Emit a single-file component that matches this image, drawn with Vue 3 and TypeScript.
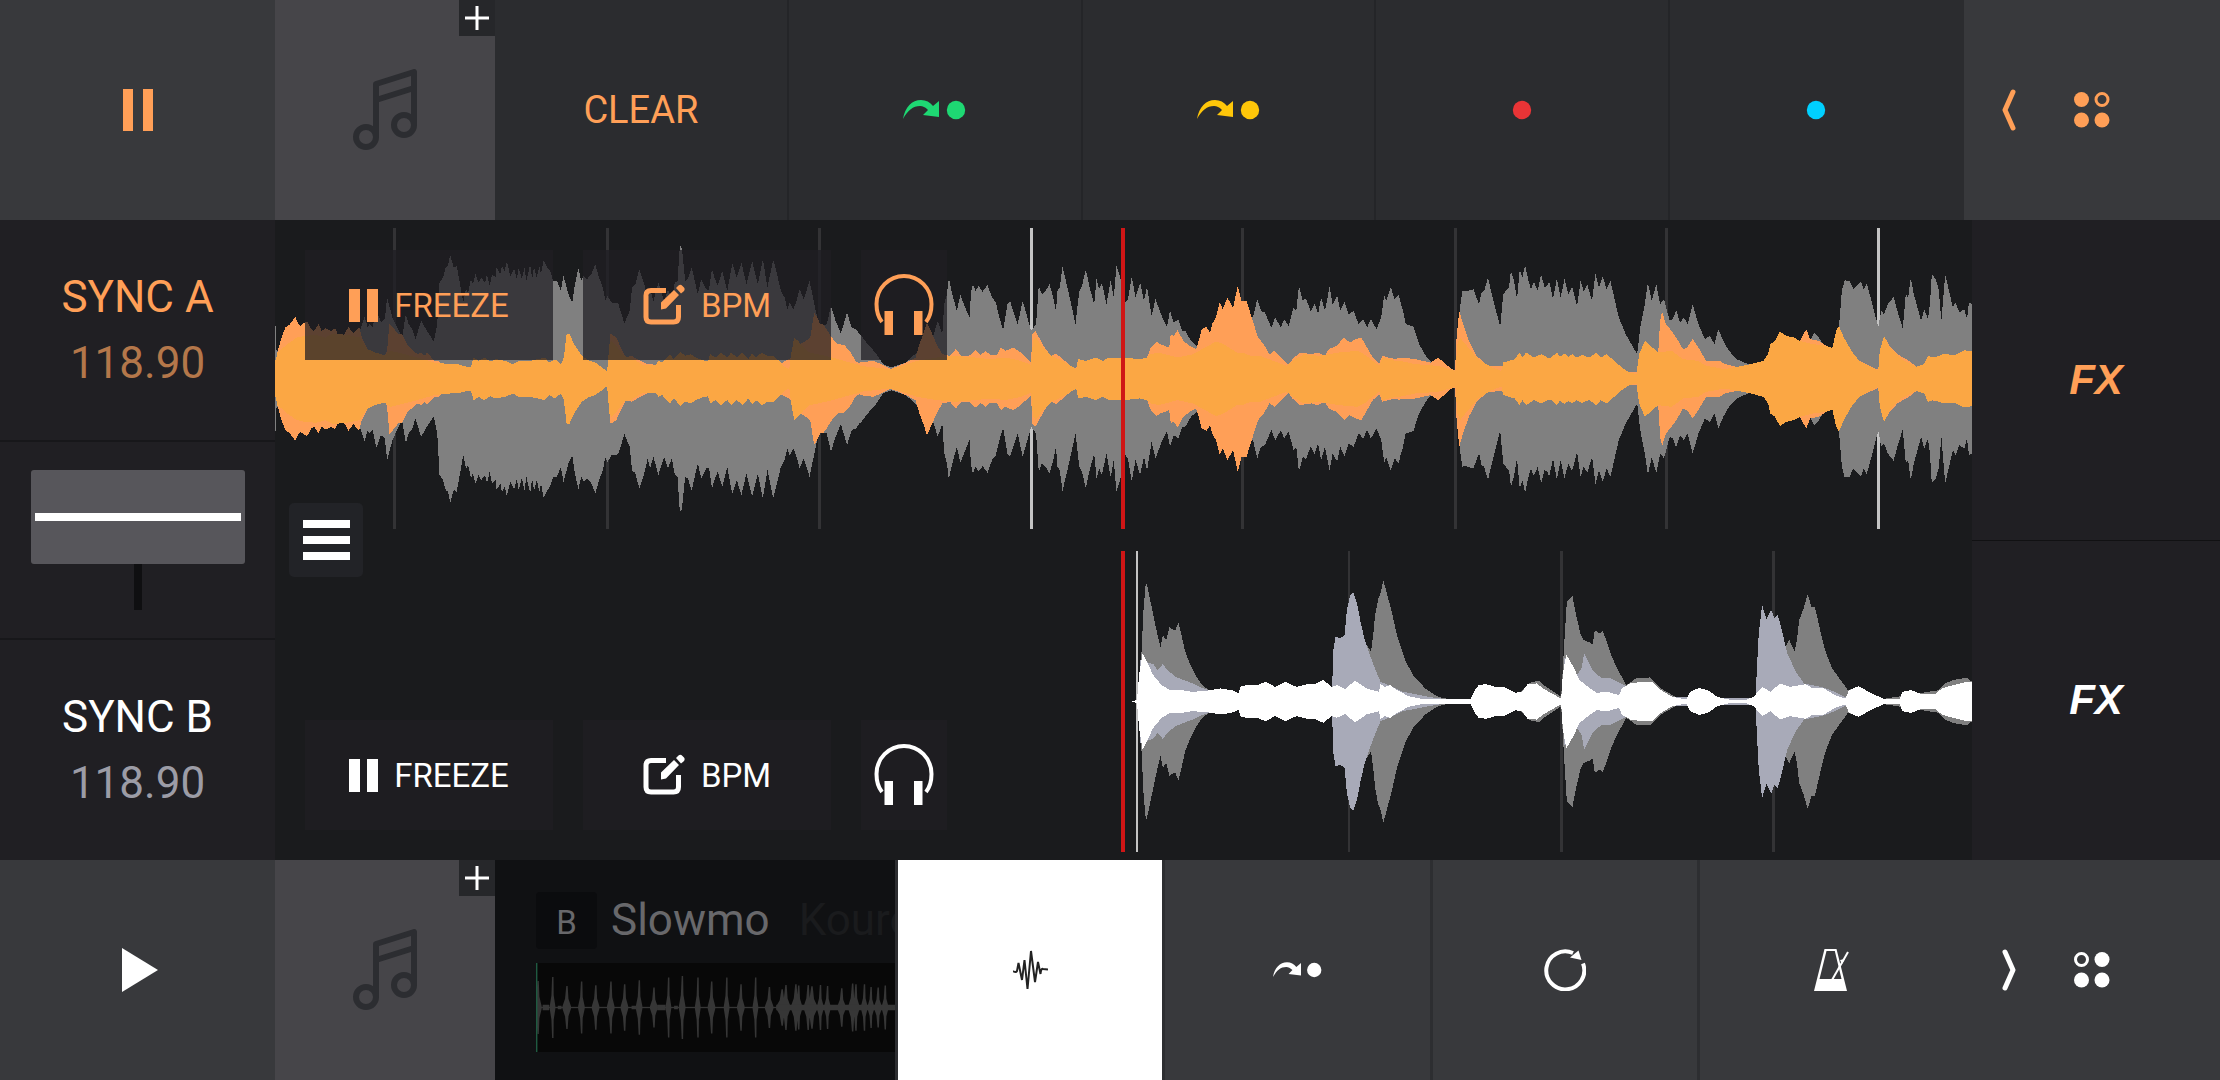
<script setup lang="ts">
import { ref } from 'vue'

type Section = { offset: number; edge: string }

// Builds a closed outline mirrored around the centre line from "x:level" pairs.
function outline(sections: Section[], zero: number, axis: number): string {
  const points: [number, number][] = []
  for (const section of sections) {
    for (const pair of section.edge.trim().split(/\s+/)) {
      const [x, level] = pair.split(':').map(Number)
      points.push([x + section.offset, Math.max(2, Math.abs(level - zero))])
    }
  }
  const top = points.map(([x, a]) => `${x} ${axis - a}`)
  const bottom = [...points].reverse().map(([x, a]) => `${x} ${axis + a}`)
  return `M${top.join('L')}L${bottom.join('L')}Z`
}

const deckA = {
  high: outline(
    [
      {
        offset: -13,
        edge: `13:634 16:634 17:560 200:600 235:620 247:663 255:631 260:640 268:630 278:683 290:645 300:655 306:720 320:660 330:635 345:600 355:670 362:640 372:625 380:595 395:650 410:620 428:588
        437:640 443:765 452:780 459:810 465:815 471:848 480:810 488:815 495:770 505:705 512:745 518:735 525:775 530:760 537:790 545:765 552:780 562:765 567:790 574:755 580:790 590:780 592:810 602:790 606:815 613:800 619:828 628:785 638:808 645:775 650:810 658:775 665:810 670:770 680:820 685:775 690:812 697:780 704:815 708:790 715:832 725:810 732:800
        740:770 750:770 760:740 767:785 780:730 790:705 796:755 806:808 813:770 820:785 828:775 840:790 850:820 860:780 870:750 876:712 882:725 893:705 910:703 926:642 940:680 946:750 955:760 965:805 978:760 987:715 993:745 1002:710 1015:765 1030:710 1040:745 1050:715 1058:765 1065:770 1070:860 1074:880 1078:850 1085:770 1092:775 1102:812 1110:770 1118:730 1127:775 1140:745 1147:742 1155:805 1163:775 1170:755 1182:800 1195:740 1208:822 1220:780 1232:825 1245:760 1260:830 1275:760 1288:835 1300:750 1315:835 1325:790 1335:740 1345:720 1352:685 1358:705 1368:685 1376:710 1384:745 1395:715 1410:770 1420:715 1430:660 1440:635 1455:640 1466:695 1478:650 1492:612 1508:675 1520:630 1532:625 1540:610`,
      },
      {
        offset: 1529,
        edge: `0:610 20:580 40:555 60:520 82:510 120:525 190:600 203:650 215:610 220:700 227:730 232:778 240:735 253:680 262:728 275:690 286:660 290:735 295:760 302:740 310:755 320:738 333:758 345:720 355:705 363:665 374:622 385:700 392:710 400:680 412:640 425:710 435:670 447:620 460:640 467:755 475:730 485:740 495:760 505:720 512:680 516:740 522:750 529:812 537:775 548:720 563:640 573:740 580:755 590:805 600:750 612:700 618:775 625:745 632:765 644:700 655:772 663:720 670:815 680:780 690:700 700:715 710:783 720:720 732:765 742:710 750:752 762:665 772:715 790:660 802:632 810:680 820:645 832:655 842:620 850:620 865:590 880:575 900:550 1020:650 1028:665 1038:715 1048:680 1058:675 1075:630 1085:660 1100:630 1108:655 1120:635 1133:690 1140:680 1147:755 1157:710 1165:718 1178:678 1188:702 1197:670 1205:720 1215:680 1227:752 1235:700 1247:725 1255:680 1266:708 1277:670 1290:680 1303:640 1315:655 1325:630 1335:655 1350:625 1362:660 1370:728 1375:710 1387:752 1397:715 1408:730`,
      },
      {
        offset: 2940,
        edge: `0:712 8:680 15:640 35:633 50:580 70:540 85:522 143:500 150:600 158:700 163:740 170:738 192:745 200:720 207:700 213:735 220:740 230:780 240:730 262:632 270:730 280:745 285:750 290:800 298:770 306:715 313:805 320:780 327:818 335:775 342:745 350:768 360:740 369:790 378:750 385:755 390:770 400:715 410:778 420:720 430:775 440:730 450:752 463:695 472:770 480:740 490:758 502:710 511:792 520:750 530:785 540:745 550:770 560:720 572:660 590:610 610:570 620:550 628:630 640:700 648:765 658:710 670:760 680:700 690:715 705:650 713:655 722:682 732:645 742:660 752:640 765:700 780:640 797:595 810:605 822:580 832:625 845:590 860:560 880:535 910:520 960:500 1060:560 1082:615 1095:600 1105:580 1130:560 1145:600 1155:740 1162:772 1175:770 1185:745 1197:760 1205:768 1212:745 1220:762 1230:720 1240:675 1250:632 1258:680 1265:670 1275:700 1290:722 1300:680 1314:628 1322:730 1328:720 1335:780 1343:730 1355:680 1362:650 1370:685 1380:655 1385:700 1390:790 1400:775 1408:745 1415:650 1425:790 1435:740 1445:690 1452:705 1462:675 1475:685 1482:655 1487:705 1495:700`,
      },
    ],
    476,
    453,
  ),
  mid: outline(
    [
      {
        offset: -13,
        edge: `14:520 18:550 30:600 40:630 52:640 66:662 75:640 80:635 90:645 97:648 108:625 115:620 127:640 135:620 145:628 160:620 170:628 180:603 192:605 205:632 218:612 233:632 240:600 255:565 275:555 300:545 306:560 312:642 325:625 335:610 345:610 360:575 375:560 385:550 395:555 405:545 410:555 430:530 440:530 445:525 480:500 882:490 890:612 905:600 915:575 930:540 945:545 960:535 985:520 1300:500 1363:540 1385:580 1400:590 1412:600 1422:675 1430:660 1438:640 1445:640 1455:625 1465:605 1475:590 1485:580 1500:578 1515:560 1530:530 1540:522`,
      },
      {
        offset: 1529,
        edge: `0:525 35:530 55:520 80:506 100:515 120:525 145:540 155:580 165:610 175:645 185:620 200:580 215:550 235:545 250:565 265:545 285:545 302:562 315:548 328:560 340:548 358:548 368:570 380:560 400:570 420:555 447:525 450:610 458:620 470:595 485:565 500:545 512:552 530:535 550:515 565:507 570:535 590:530 615:540 635:530 650:540 665:540 690:540 730:535 750:540 760:570 775:588 785:580 808:570 812:610 820:605 830:622 845:590 862:575 878:565 885:590 893:625 905:632 915:615 920:640 930:660 940:705 948:685 960:720 975:690 987:755 997:710 1010:710 1025:655 1040:600 1055:580 1070:550 1083:560 1100:540 1120:518 1130:535 1150:555 1180:550 1195:555 1215:545 1225:565 1245:575 1265:600 1280:585 1295:595 1310:600 1325:570 1340:540 1357:522 1365:545 1380:540 1400:535 1410:540`,
      },
      {
        offset: 2940,
        edge: `0:538 20:538 40:535 80:525 100:540 115:525 135:505 144:503 148:600 155:680 165:640 180:590 200:545 230:515 620:495 625:550 640:590 655:575 675:555 680:650 685:678 695:640 710:620 722:600 740:565 750:570 765:595 780:570 800:530 835:530 850:520 880:512 910:518 950:530 962:550 968:580 980:590 993:618 1010:605 1030:600 1045:590 1052:605 1062:625 1072:595 1095:590 1115:575 1130:568 1140:620 1147:635 1160:600 1180:560 1200:530 1250:503 1254:560 1265:605 1280:575 1300:550 1330:530 1350:512 1370:520 1380:540 1495:550`,
      },
    ],
    476,
    453,
  ),
  low: outline(
    [
      {
        offset: -13,
        edge: `14:530 20:555 45:580 70:600 90:605 120:608 145:600 165:612 200:608 235:600 240:590 255:565 275:555 300:547 315:560 345:552 400:535 430:525 470:520 490:520 515:512 525:512 532:540 545:530 560:540 575:528 590:535 615:530 635:520 650:530 680:530 700:535 718:540 730:525 745:535 760:520 768:540 775:610 782:612 795:580 815:545 835:530 850:525 870:508 881:498 887:580 892:590 905:575 925:545 945:538 975:518 1008:518 1015:530 1025:525 1045:550 1055:535 1073:557 1085:545 1100:550 1113:540 1130:532 1145:528 1150:550 1165:540 1178:555 1195:540 1205:555 1220:540 1235:555 1250:535 1260:552 1270:540 1285:555 1300:545 1315:545 1330:530 1345:512 1357:505 1362:550 1370:600 1380:590 1395:570 1410:555 1440:548 1470:540 1500:530 1540:518`,
      },
      {
        offset: 1529,
        edge: `0:515 80:505 110:515 150:530 200:540 250:545 300:540 340:535 380:540 420:530 447:518 452:590 460:600 475:575 500:545 530:530 565:505 570:535 590:530 615:540 635:530 650:540 690:540 730:535 750:540 760:550 780:555 830:540 870:550 930:588 950:580 985:555 1000:555 1020:545 1045:545 1080:530 1115:515 1130:530 1160:550 1200:545 1225:550 1250:555 1300:560 1320:548 1357:515 1365:540 1400:530 1410:530`,
      },
      {
        offset: 2940,
        edge: `0:530 40:520 100:515 145:500 150:580 157:600 175:575 205:535 240:510 265:500 270:525 300:535 312:555 320:540 330:555 350:540 370:550 385:540 395:540 410:555 418:542 430:552 440:542 450:550 462:540 475:548 495:540 513:555 525:540 540:550 560:530 580:510 600:495 618:490 625:550 640:590 655:575 675:555 710:560 740:535 780:530 800:515 850:505 880:512 910:518 950:530 962:550 968:580 980:590 993:618 1010:605 1030:600 1045:590 1062:585 1080:580 1115:575 1130:568 1140:620 1147:635 1160:600 1180:560 1200:530 1250:500 1254:560 1265:605 1280:570 1310:535 1350:512 1370:520 1380:545 1395:540 1420:550 1450:548 1475:562 1495:558`,
      },
    ],
    476,
    453,
  ),
}

const deckB = {
  high: outline(
    [
      {
        offset: 0,
        edge: `68:480 74:340 78:200 82:125 86:150 92:200 100:265 108:322 112:285 118:300 124:262 130:268 134:272 140:248 146:290 152:335 160:370 170:405 180:430 192:448 210:480 450:480 470:300 483:335 488:270 490:230 496:175 500:160 505:120 512:165 520:215 530:290 545:365 560:410 580:445 600:468 615:475 745:480 752:450 765:428 782:422 795:440 822:470 826:350 832:185 838:175 842:168 848:220 856:280 862:300 870:305 878:312 882:270 890:280 896:272 902:300 912:350 925:395 938:435 955:415 980:412 1000:445 1025:470 1040:478 1200:480 1222:320 1228:298 1238:335 1242:300 1246:240 1254:205 1261:163 1268:200 1274:200 1282:260 1292:330 1305:385 1320:420 1333:450 1352:440 1390:478 1495:450 1506:430 1520:420 1545:412 1554:425`,
      },
    ],
    484,
    451,
  ),
  mid: outline(
    [
      {
        offset: 0,
        edge: `72:360 95:372 103:390 112:372 120:390 135:410 150:420 165:430 180:442 195:450 210:478 413:478 416:330 420:290 428:295 436:285 440:210 446:165 452:158 458:190 465:250 472:300 480:340 490:385 500:425 515:435 540:455 580:468 605:475 823:478 828:350 850:405 858:385 863:340 870:365 880:395 895:415 910:415 930:432 940:440 1000:470 1168:475 1174:280 1180:195 1188:238 1196:208 1202:235 1208:225 1215:270 1225:340 1240:395 1255:430 1285:440 1310:455 1330:472`,
      },
    ],
    484,
    451,
  ),
  low: outline(
    [
      {
        offset: 0,
        edge: `58:483 66:480 70:400 76:340 85:370 95:405 110:435 125:450 145:450 165:455 190:452 215:445 235:450 247:460 250:440 265:433 280:435 295:425 312:440 330:425 350:440 370:432 385:430 398:420 413:440 422:435 438:447 445:435 455:422 475:445 497:455 500:432 508:440 517:435 530:450 550:468 570:475 600:478 660:478 668:450 675:435 688:432 705:440 722:442 740:458 752:455 762:432 778:430 790:445 805:460 822:475 825:400 831:343 842:375 855:420 870:440 885:458 905:455 925:465 930:445 945:430 965:425 985:425 1000:450 1020:470 1045:478 1052:455 1068:443 1085:452 1100:470 1120:478 1150:480 1165:470 1180:440 1195:455 1212:430 1230:440 1258:432 1270:445 1290:445 1310:465 1328:475 1335:450 1352:438 1370:455 1395:475 1425:478 1430:455 1445:450 1465:462 1490:460 1500:445 1520:435 1545:425 1554:425`,
      },
    ],
    484,
    451,
  ),
}

const gridA = [
  { x: 312, bar: false },
  { x: 869, bar: false },
  { x: 1423, bar: false },
  { x: 1977, bar: true },
  { x: 2529, bar: false },
  { x: 3085, bar: false },
  { x: 3636, bar: false },
  { x: 4190, bar: true },
]
const gridB = [
  { x: 66, bar: true },
  { x: 444, bar: false },
  { x: 822, bar: false },
  { x: 1200, bar: false },
]

// Track overview: position, height and width of each hit.
const hits: [number, number, number][] = [
  [4, 80, 8], [35, 92, 6], [65, 65, 9], [96, 78, 7], [126, 67, 8], [158, 78, 8], [187, 70, 8], [218, 82, 7],
  [249, 60, 8], [280, 90, 6], [309, 95, 7], [342, 90, 6], [371, 78, 8], [403, 90, 6], [433, 70, 8], [464, 90, 6],
  [493, 62, 9], [520, 55, 12], [528, 68, 10], [549, 70, 10], [555, 66, 8], [575, 68, 9], [583, 64, 12], [601, 68, 7],
  [616, 65, 7], [646, 58, 9], [669, 72, 9], [676, 70, 8], [694, 70, 7], [708, 62, 7], [723, 60, 8], [738, 66, 7],
]
const hitPath = hits
  .map(([x, h, w]) => {
    const s = w * 0.4
    return `M${x - w} 130L${x - s} ${134 - h * 0.4}L${x - 1} ${134 - h}H${x + 2}L${x + s} ${134 - h * 0.4}L${x + w} 130V138L${x + s} ${134 + h * 0.4}L${x + 2} ${134 + h}H${x - 1}L${x - s} ${134 + h * 0.4}L${x - w} 138Z`
  })
  .join('')

const jumpShape = 'M0 19C2 7 9 0 18 0C23 0 27 2 30 6L36 1V17L20 15L25 10C22 7 20 6 17 6C10 6 5 10 0 19Z'
const pads = [
  { name: 'Cue 1', color: '#1ed873', jump: true },
  { name: 'Cue 2', color: '#fec609', jump: true },
  { name: 'Cue 3', color: '#e93436', jump: false },
  { name: 'Cue 4', color: '#00d0ff', jump: false },
]
const tabs = ['Waveform', 'Cues', 'Loop', 'Tempo']
const decks = [
  { id: 'a', wave: deckA, grid: gridA, box: '0 0 4435 904', head: 2211, headWidth: 11, lineWidth: 8 },
  { id: 'b', wave: deckB, grid: gridB, box: '-1470 0 3024 902', head: 37, headWidth: 8, lineWidth: 5 },
]
const fade = ref(0)
</script>

<template>
  <main class="app">
    <header class="strip strip-a">
      <button class="transport" aria-label="Pause deck A">
        <svg width="30" height="42" viewBox="0 0 30 42"><path d="M0 0H10V42H0ZM20 0H30V42H20Z" /></svg>
      </button>
      <div class="album">
        <svg class="note" width="64" height="82" viewBox="0 0 64 82">
          <circle cx="13" cy="68" r="10" /><circle cx="51" cy="56" r="10" />
          <path d="M23 68V15L61 3V56M23 31L61 19" />
        </svg>
        <button class="add" aria-label="Load track on deck A">
          <svg width="24" height="24" viewBox="0 0 24 24"><path d="M12 0V24M0 12H24" /></svg>
        </button>
      </div>
      <nav class="pads">
        <button class="pad clear">CLEAR</button>
        <button v-for="p in pads" :key="p.name" class="pad" :aria-label="p.name">
          <svg v-if="p.jump" width="63" height="20" viewBox="0 0 63 20" :style="{ fill: p.color }">
            <path :d="jumpShape" /><circle cx="53" cy="10" r="9.2" />
          </svg>
          <svg v-else width="20" height="20" viewBox="0 0 20 20" :style="{ fill: p.color }"><circle cx="10" cy="10" r="9.2" /></svg>
        </button>
      </nav>
      <div class="modes">
        <button class="arrow" aria-label="Previous panel">
          <svg width="16" height="42" viewBox="0 0 16 42"><path d="M12 3L4 21L12 39" /></svg>
        </button>
        <button class="dots" aria-label="Panels deck A">
          <svg width="36" height="36" viewBox="0 0 36 36">
            <circle cx="7.5" cy="7.5" r="7.5" /><circle class="ring" cx="28" cy="7.5" r="6" />
            <circle cx="7.5" cy="28" r="7.5" /><circle cx="28" cy="28" r="7.5" />
          </svg>
        </button>
      </div>
    </header>

    <section class="middle">
      <aside class="side">
        <button class="sync a"><span>SYNC A</span><span class="tempo">118.90</span></button>
        <div class="fader"><input v-model="fade" type="range" min="0" max="100" aria-label="Crossfader" /></div>
        <button class="sync b"><span>SYNC B</span><span class="tempo">118.90</span></button>
      </aside>

      <div class="waves">
        <div v-for="d in decks" :key="d.id" class="deck" :class="d.id">
          <svg class="wave" :viewBox="d.box" preserveAspectRatio="none" shape-rendering="crispEdges">
            <rect v-for="g in d.grid" :key="g.x" :class="g.bar ? 'bar' : 'beat'" :x="g.x - d.lineWidth / 2" y="0" :width="d.lineWidth" height="904" />
            <path class="high" :d="d.wave.high" /><path class="mid" :d="d.wave.mid" /><path class="low" :d="d.wave.low" />
            <rect class="head" :x="d.head" y="0" :width="d.headWidth" height="904" />
          </svg>
          <div class="controls">
            <button class="control">
              <svg width="29" height="33" viewBox="0 0 29 33"><path d="M0 0H11V33H0ZM18 0H29V33H18Z" /></svg>FREEZE
            </button>
            <button class="control">
              <svg width="42" height="42" viewBox="0 0 42 42">
                <path class="frame" d="M23 6.5H8Q3 6.5 3 11.5V33Q3 38 8 38H30.5Q35.5 38 35.5 33V21" />
                <path d="M18 25.5V18.5L31 6L36 11L23 24.5ZM33 4L35.5 1.5Q37.5 0 39.5 2L41 3.5Q42.5 5.5 40.5 7.5L38 9.500Z" />
              </svg>BPM
            </button>
            <button class="control phones" aria-label="Pre-cueing">
              <svg width="60" height="62" viewBox="0 0 60 62">
                <path class="band" d="M8 48C4 43 2.5 36 2.5 30A27.5 28 0 0 1 57.5 30C57.5 36 56 43 52 48" />
                <path d="M10.5 37H19V61H10.5ZM40 37H48.5V61H40Z" />
              </svg>
            </button>
          </div>
        </div>
        <button class="menu" aria-label="Menu"><i></i><i></i><i></i></button>
      </div>

      <aside class="effects">
        <button class="fx a">FX</button>
        <button class="fx b">FX</button>
      </aside>
    </section>

    <footer class="strip strip-b">
      <button class="transport" aria-label="Play deck B">
        <svg class="play" width="36" height="44" viewBox="0 0 36 44"><path d="M0 0L36 22L0 44Z" /></svg>
      </button>
      <div class="album">
        <svg class="note" width="64" height="82" viewBox="0 0 64 82">
          <circle cx="13" cy="68" r="10" /><circle cx="51" cy="56" r="10" />
          <path d="M23 68V15L61 3V56M23 31L61 19" />
        </svg>
        <button class="add" aria-label="Load track on deck B">
          <svg width="24" height="24" viewBox="0 0 24 24"><path d="M12 0V24M0 12H24" /></svg>
        </button>
      </div>
      <div class="track">
        <div class="title"><span class="badge">B</span><span class="name">Slowmo</span><span class="artist">Kouro</span></div>
        <svg class="overview" viewBox="0 0 759 268" preserveAspectRatio="none">
          <path :d="hitPath" /><rect x="0" y="132" width="759" height="4" />
          <path d="M14 126H28V142H14ZM46 129H54V139H46ZM202 129H212V139H202ZM256 126H274V142H256ZM292 129H300V139H292ZM508 126H759V142H508Z" />
          <rect class="start" x="0" y="0" width="3" height="268" />
        </svg>
      </div>
      <nav class="tabs">
        <button v-for="(t, i) in tabs" :key="t" class="tab" :class="{ active: i === 0 }" :aria-label="t">
          <svg v-if="i === 0" class="pulse" width="35" height="42" viewBox="0 0 35 42">
            <path d="M0 22Q3 24 4 22L5.5 14L9 31L11.5 11L14.5 40L18 2L22 33L25 13L27.5 25Q28 19 30 20L35 20.5" />
          </svg>
          <svg v-else-if="i === 1" width="49" height="16" viewBox="0 0 63 20"><path :d="jumpShape" /><circle cx="53" cy="10" r="9.2" /></svg>
          <svg v-else-if="i === 2" width="42" height="42" viewBox="0 0 42 42">
            <path class="loop" d="M39 14.5A19 19 0 1 1 29 4" /><path d="M34.5 1.5L37.5 11L26 8.5Z" />
          </svg>
          <svg v-else width="36" height="42" viewBox="0 0 36 42">
            <path d="M10.5 0H22.5L33 42H0ZM12.5 2L5.5 30H27.5L20.8 2Z" fill-rule="evenodd" />
            <path class="needle" d="M18 31L34 3" /><path d="M26 11L31 10L28 15Z" />
          </svg>
        </button>
      </nav>
      <div class="modes">
        <button class="arrow" aria-label="Next panel">
          <svg width="16" height="42" viewBox="0 0 16 42"><path d="M4 3L12 21L4 39" /></svg>
        </button>
        <button class="dots" aria-label="Panels deck B">
          <svg width="36" height="36" viewBox="0 0 36 36">
            <circle class="ring" cx="7.5" cy="7.5" r="6" /><circle cx="28" cy="7.5" r="7.5" />
            <circle cx="7.5" cy="28" r="7.5" /><circle cx="28" cy="28" r="7.5" />
          </svg>
        </button>
      </div>
    </footer>
  </main>
</template>

<style>
body {
  margin: 0;
  background: #1a1b1d;
}
</style>

<style scoped>
.app {
  --orange: #ff9f57;
  display: grid;
  grid-template-rows: 220px minmax(640px, 1fr) 220px;
  min-height: 100vh;
  font-family: Roboto, "Liberation Sans", sans-serif;
  color: #fff;
}
button {
  margin: 0;
  padding: 0;
  border: 0;
  background: none;
  color: inherit;
  font: inherit;
  display: flex;
  align-items: center;
  justify-content: center;
}
svg {
  display: block;
}
button svg {
  fill: currentColor;
}
.strip {
  display: grid;
  background: #38393c;
}
.strip-a {
  grid-template-columns: 275px 220px 1fr 256px;
  color: var(--orange);
}
.strip-b {
  grid-template-columns: 275px 220px minmax(0, 400px) 1fr 256px;
}
.play {
  margin-left: 4px;
}
.album {
  position: relative;
  display: flex;
  align-items: center;
  justify-content: center;
  background: #464549;
}
.note {
  fill: none;
  stroke: #2c2d31;
  stroke-width: 6;
  stroke-linejoin: round;
}
.add {
  position: absolute;
  top: 0;
  right: 0;
  width: 36px;
  height: 36px;
  background: #26272a;
  color: #fff;
}
.add svg {
  stroke: currentColor;
  stroke-width: 3;
}
.pads {
  display: grid;
  grid-template-columns: repeat(5, 1fr);
  background: #2b2c2f;
}
.pad {
  border-right: 2px solid #242528;
}
.pad:last-child {
  border-color: transparent;
}
.clear {
  font-size: 38px;
}
.modes {
  display: flex;
}
.arrow {
  width: 89px;
}
.arrow svg {
  fill: none;
  stroke: currentColor;
  stroke-width: 5;
  stroke-linecap: round;
  stroke-linejoin: round;
}
.dots {
  width: 77px;
}
.ring {
  fill: none;
  stroke: currentColor;
  stroke-width: 3;
}
.middle {
  display: grid;
  grid-template-columns: 275px 1fr 248px;
}
.side,
.effects {
  display: flex;
  flex-direction: column;
  background: #201f23;
}
.sync {
  flex: 221;
  flex-direction: column;
  font-size: 44px;
  line-height: 66px;
}
.sync.a,
.fx.a {
  color: var(--orange);
}
.sync.a .tempo {
  color: #b4774a;
}
.sync.b .tempo {
  color: #9c9ca6;
}
.fader {
  flex: 198;
  display: flex;
  align-items: center;
  justify-content: center;
  border: solid #17171a;
  border-width: 2px 0;
}
.fader input {
  appearance: none;
  writing-mode: vertical-lr;
  width: 214px;
  height: 140px;
  margin: 0;
  background: linear-gradient(#0f0f11, #0f0f11) center / 8px 100% no-repeat;
}
.fader input::-webkit-slider-thumb {
  appearance: none;
  width: 214px;
  height: 94px;
  border-radius: 3px;
  background: linear-gradient(#fff, #fff) center / 206px 8px no-repeat #57565b;
}
.waves {
  position: relative;
  display: flex;
  flex-direction: column;
  gap: 22px;
  padding: 8px 0;
  background: #1a1b1d;
}
.deck {
  position: relative;
  flex: 1;
}
.wave {
  position: absolute;
  width: 100%;
  height: 100%;
}
.beat {
  fill: #333335;
}
.bar {
  fill: #c4c4c4;
}
.head {
  fill: #cf1616;
}
.high {
  fill: #808080;
}
.a .mid {
  fill: var(--orange);
}
.a .low {
  fill: #fba744;
}
.b .mid {
  fill: #a8aab8;
}
.b .low {
  fill: #fff;
}
.controls {
  position: absolute;
  left: 30px;
  top: 22px;
  display: flex;
  gap: 30px;
}
.b .controls {
  top: auto;
  bottom: 22px;
}
.a .controls {
  color: var(--orange);
}
.control {
  width: 248px;
  height: 110px;
  gap: 16px;
  background: rgba(31, 30, 36, 0.73);
  font-size: 33px;
}
.phones {
  width: 86px;
}
.frame,
.band {
  fill: none;
  stroke: currentColor;
  stroke-width: 5;
}
.band {
  stroke-width: 4;
}
.menu {
  position: absolute;
  left: 14px;
  top: 50%;
  transform: translateY(-50%);
  width: 74px;
  height: 74px;
  flex-direction: column;
  gap: 8px;
  border-radius: 5px;
  background: #222327;
}
.menu i {
  width: 47px;
  height: 8px;
  background: #fff;
}
.fx {
  flex: 1;
  font: italic bold 42px "Liberation Sans", sans-serif;
}
.fx.a {
  border-bottom: 1px solid #111113;
}
.track {
  padding: 32px 0 28px 41px;
  background: #101113;
  overflow: hidden;
}
.title {
  display: flex;
  align-items: center;
  font-size: 44px;
  line-height: 57px;
  white-space: nowrap;
}
.badge {
  width: 61px;
  flex: none;
  padding-top: 4px;
  line-height: 53px;
  border-radius: 4px;
  background: #0b0c0e;
  color: #68686b;
  font-size: 33px;
  text-align: center;
}
.name {
  margin-left: 14px;
  color: #68686b;
}
.artist {
  margin-left: 29px;
  color: #1a1b1d;
}
.overview {
  width: 100%;
  height: 89px;
  margin-top: 14px;
  background: #080808;
  fill: #363636;
}
.start {
  fill: #1f5a41;
}
.tabs {
  display: flex;
  gap: 3px;
  padding-left: 3px;
  background: #2d2e31;
}
.tab {
  flex: 1;
  background: #38393c;
}
.active {
  background: #fff;
  color: #222;
}
.pulse path {
  fill: none;
  stroke: currentColor;
  stroke-width: 2;
}
.loop {
  fill: none;
  stroke: currentColor;
  stroke-width: 4;
}
.needle {
  stroke: currentColor;
  stroke-width: 2;
}
</style>
